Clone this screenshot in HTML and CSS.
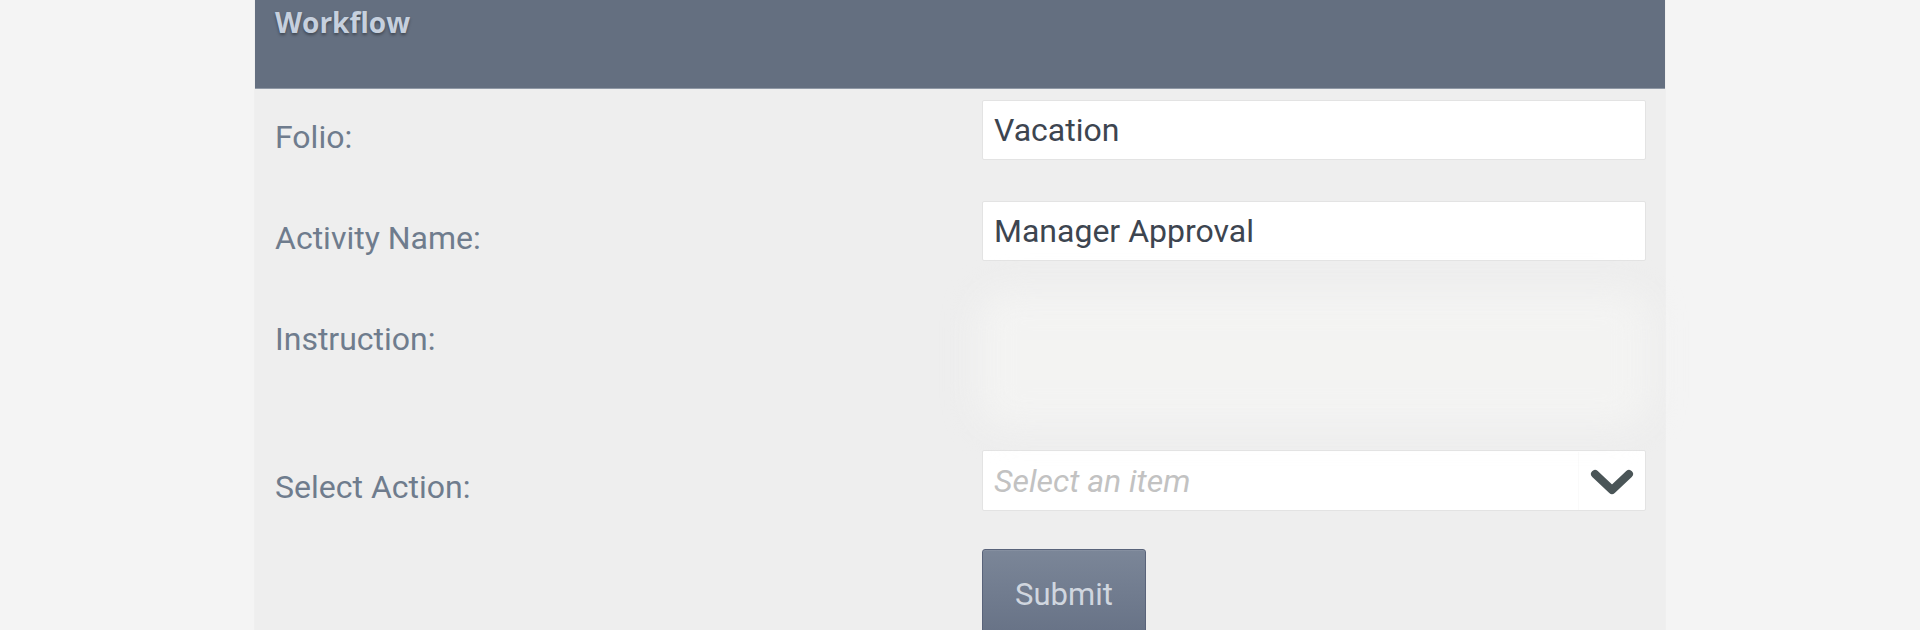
FILE: index.html
```html
<!DOCTYPE html>
<html lang="en">
<head>
<meta charset="utf-8">
<title>Workflow</title>
<link rel="stylesheet" href="styles.css">
</head>
<body>
<div class="page">
  <section class="panel">
    <header class="panel-header">
      <h1 class="panel-title">Workflow</h1>
    </header>
    <div class="form">
      <div class="row">
        <div class="label">Folio:</div>
        <div class="field"><div class="input">Vacation</div></div>
      </div>
      <div class="row">
        <div class="label">Activity Name:</div>
        <div class="field"><div class="input">Manager Approval</div></div>
      </div>
      <div class="row row-instruction">
        <div class="label">Instruction:</div>
        <div class="field"><div class="instruction"></div></div>
      </div>
      <div class="row row-select">
        <div class="label">Select Action:</div>
        <div class="field">
          <div class="select">
            <span class="placeholder">Select an item</span>
            <span class="select-arrow">
              <svg width="46" height="30" viewBox="0 0 46 30" aria-hidden="true">
                <path d="M6 6 L23 22 L40 6" fill="none" stroke="#4a5557" stroke-width="8" stroke-linecap="round" stroke-linejoin="round"/>
              </svg>
            </span>
          </div>
        </div>
      </div>
      <div class="row row-button">
        <div class="label"></div>
        <div class="field"><button class="submit" type="button">Submit</button></div>
      </div>
    </div>
  </section>
</div>
</body>
</html>
```

FILE: styles.css
```css
html, body {
  margin: 0;
  padding: 0;
}
body {
  background: #f4f4f4;
  font-family: Roboto, "Liberation Sans", sans-serif;
  height: 630px;
  overflow: hidden;
}
.page {
  display: flex;
  justify-content: center;
}
.panel {
  width: 1410px;
  min-height: 630px;
  background: #eeeeee;
  box-shadow: 0 0 1px rgba(0, 0, 0, 0.12);
}
.panel-header {
  height: 88px;
  background: #646f80;
  border-bottom: 1px solid #8f98a5;
  padding: 0 20px;
}
.panel-title {
  margin: 0;
  padding-top: 3px;
  font-family: "Open Sans", "Noto Sans", sans-serif;
  font-weight: 700;
  font-size: 28px;
  line-height: 38px;
  color: #c6d0de;
  text-shadow: 0 2px 3px rgba(0, 0, 0, 0.35);
}
.form {
  padding: 11px 19px 0 20px;
  display: flex;
  flex-direction: column;
}
.row {
  display: grid;
  grid-template-columns: 707px 664px;
  margin-bottom: 41px;
}
.row-instruction {
  margin-bottom: 41px;
}
.row-select {
  margin-bottom: 38px;
}
.label {
  padding-top: 19px;
  font-size: 32px;
  line-height: 37px;
  color: #6f7c8d;
}
.input,
.select {
  box-sizing: border-box;
  height: 60px;
  background: #ffffff;
  border: 1px solid #e3e3e3;
  border-radius: 2px;
  padding-left: 11px;
  font-size: 32px;
  line-height: 58px;
  color: #3d4550;
}
.instruction {
  height: 135px;
  margin: -10px -4px -18px -4px;
  border-radius: 30px;
  background: #f3f3f2;
  filter: blur(16px);
}
.select {
  height: 61px;
  display: flex;
  align-items: center;
  justify-content: space-between;
}
.placeholder {
  font-style: italic;
  color: #c2c2c2;
  line-height: 58px;
}
.select-arrow {
  display: flex;
  align-items: center;
  height: 58px;
  padding: 4px 10px 0 10px;
  border-left: 1px solid #fafafa;
  box-sizing: border-box;
}
.submit {
  width: 164px;
  height: 92px;
  margin: 0;
  padding: 0;
  border: 1px solid #59637a;
  border-radius: 3px;
  background: linear-gradient(#7b8698, #667185);
  color: #d0d6df;
  font-family: Roboto, "Liberation Sans", sans-serif;
  font-size: 31px;
  line-height: 90px;
  text-align: center;
  box-shadow: inset 0 1px 0 rgba(255, 255, 255, 0.08);
}
```
